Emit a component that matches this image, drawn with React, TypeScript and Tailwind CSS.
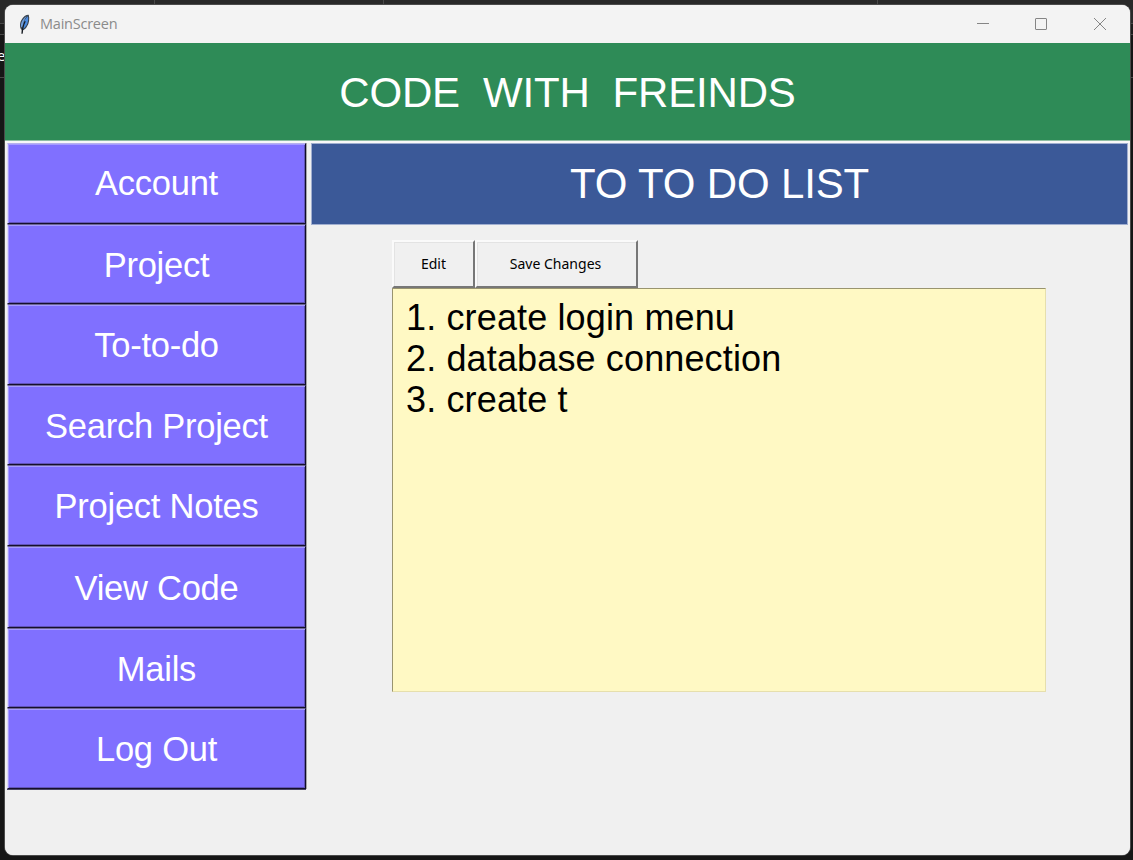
const menu = [
  { label: "Account", h: "h-[81px] pt-[1px]", top: "border-t-[#b7b0ed]" },
  { label: "Project", h: "h-[80px] pt-[3px]", top: "border-t-[#6d6694]" },
  { label: "To-to-do", h: "h-[81px] pt-[2px]", top: "border-t-[#6d6694]" },
  { label: "Search Project", h: "h-[80px] pt-[4px]", top: "border-t-[#6d6694]" },
  { label: "Project Notes", h: "h-[81px] pt-[3px]", top: "border-t-[#6d6694]" },
  { label: "View Code", h: "h-[82px] pt-[3px]", top: "border-t-[#6d6694]" },
  { label: "Mails", h: "h-[80px] pt-[4px]", top: "border-t-[#6d6694]" },
  { label: "Log Out", h: "h-[81px] pt-[3px]", top: "border-t-[#6d6694]" },
];

const tasks = ["1. create login menu", "2. database connection", "3. create t"];

function Feather() {
  return (
    <svg width="14" height="21" viewBox="0 0 14 21" className="block">
      <path d="M4 19.5 L3.8 16 C1.6 14.5 1.4 9.5 3.4 6 C5.4 2.4 8.4 .6 10.8 .9 C11.8 4.5 11.2 9.2 9 12.6 C7.8 14.6 6.2 16 5 16.5 Z" fill="#3a4450" />
      <path d="M5 14.5 C4.6 10 6.6 4.8 10 2.2 C10.6 5.8 9.8 9.4 8 12 C7.1 13.3 6.2 14.2 5 14.9 Z" fill="#4a8be0" />
      <path d="M3 12.8 C2.5 9 5 4.2 8.6 2.3 C6.2 5.5 5.2 8.8 4.4 13.8 Z" fill="#6f9ddb" />
      <path d="M7.2 7.2 C5.6 10 4.6 13.5 4 19.8" fill="none" stroke="#15191f" strokeWidth="1.3" />
    </svg>
  );
}

function TitleBar() {
  return (
    <div className="flex h-[38px] shrink-0 items-center bg-[#f3f3f3] pl-[13px] text-[#8b8b8b]">
      <Feather />
      <span className="ml-2 grow font-['Open_Sans',sans-serif] text-[14.5px] tracking-[-0.23px]">MainScreen</span>
      <svg width="153" height="38" viewBox="0 0 153 38" fill="none" stroke="#858585" strokeWidth="1">
        <path d="M0 18.5 H12" />
        <rect x="58.5" y="13.5" width="11" height="11" rx="0.5" />
        <path d="M117 13 L129 25 M129 13 L117 25" />
      </svg>
    </div>
  );
}

export default function App() {
  return (
    <div className="relative h-[860px] w-[1133px] overflow-hidden bg-[#161616] font-['Liberation_Sans',Arial,sans-serif]">
      <div className="h-[35px] border-b border-[#484848] bg-[linear-gradient(#292929_0_23px,#484848_23px_24px,#1c1c1c_24px)]" />
      <div className="h-[43px] border-b border-[#484848]" />
      <span className="absolute left-[-3px] top-[44px] font-['Open_Sans',sans-serif] text-[15px] text-white">e</span>
      <div className="absolute left-[154px] top-0 h-[5px] w-px bg-[#484848]" />
      <div className="absolute left-[383px] top-0 h-[5px] w-px bg-[#484848]" />
      <div className="absolute left-[877px] top-0 h-[5px] w-px bg-[#484848]" />
      <div className="absolute left-[5px] top-[5px] flex h-[850px] w-[1125px] flex-col overflow-hidden rounded-[8px] bg-[#f0f0f0] shadow-[0_0_0_1px_#4b4b4b]">
        <TitleBar />
        <header className="flex h-[98px] shrink-0 items-center justify-center whitespace-pre border-b border-[#8fbea3] bg-[#2e8b57] pt-px text-[42px] tracking-[-0.17px] text-white">
          <span>CODE  WITH  FREINDS</span>
        </header>
        <div className="flex grow bg-[linear-gradient(#f8f8f8_0_2px,#f0f0f0_2px)] pl-[2px] pt-[2px]">
          <nav className="flex h-[646px] w-[299px] shrink-0 flex-col shadow-[1px_0_0_#a5a5a5,0_1px_0_#4a4566]">
            {menu.map((item) => (
              <button
                key={item.label}
                className={`${item.h} ${item.top} flex w-[299px] shrink-0 items-center justify-center border border-b-[#15102b] border-l-[#dedaf8] border-r-[#100b2b] bg-[#8070ff] text-[34.5px] tracking-[-0.25px] text-white shadow-[inset_1px_1px_0_#a69cff,inset_-1px_-1px_0_#6053b8]`}
              >
                {item.label}
              </button>
            ))}
          </nav>
          <main className="ml-[5px] w-[817px]">
            <h1 className="flex h-[82px] items-center justify-center border border-[#a1afd0] bg-[#3b5998] pb-[2px] text-[42px] tracking-[-0.15px] text-white">
              TO TO DO LIST
            </h1>
            <div className="ml-[81px] mt-[15px] flex h-[48px] font-['Noto_Sans',sans-serif] text-[14px] tracking-[0.02px] text-black">
              <button className="w-[83px] border-2 border-b-[#777] border-l-[#fafafa] border-r-[#777] border-t-[#fafafa] bg-[#f0f0f0] pb-[2px] shadow-[inset_1px_1px_0_#e3e3e3]">
                Edit
              </button>
              <button className="w-[163px] border-2 border-b-[#777] border-l-[#fafafa] border-r-[#777] border-t-[#fafafa] bg-[#f0f0f0] pb-[2px] pr-[2px] shadow-[inset_1px_1px_0_#e3e3e3]">
                Save Changes
              </button>
            </div>
            <div className="ml-[81px] h-[404px] w-[654px] border border-b-[#e6dfad] border-l-[#99946f] border-r-[#e6dfad] border-t-[#99946f] bg-[#fff9c4] pl-[13px] pt-[8px] text-[36px] leading-[41px] tracking-[0.14px] text-black">
              {tasks.map((task) => (
                <div key={task}>{task}</div>
              ))}
            </div>
          </main>
        </div>
      </div>
    </div>
  );
}
